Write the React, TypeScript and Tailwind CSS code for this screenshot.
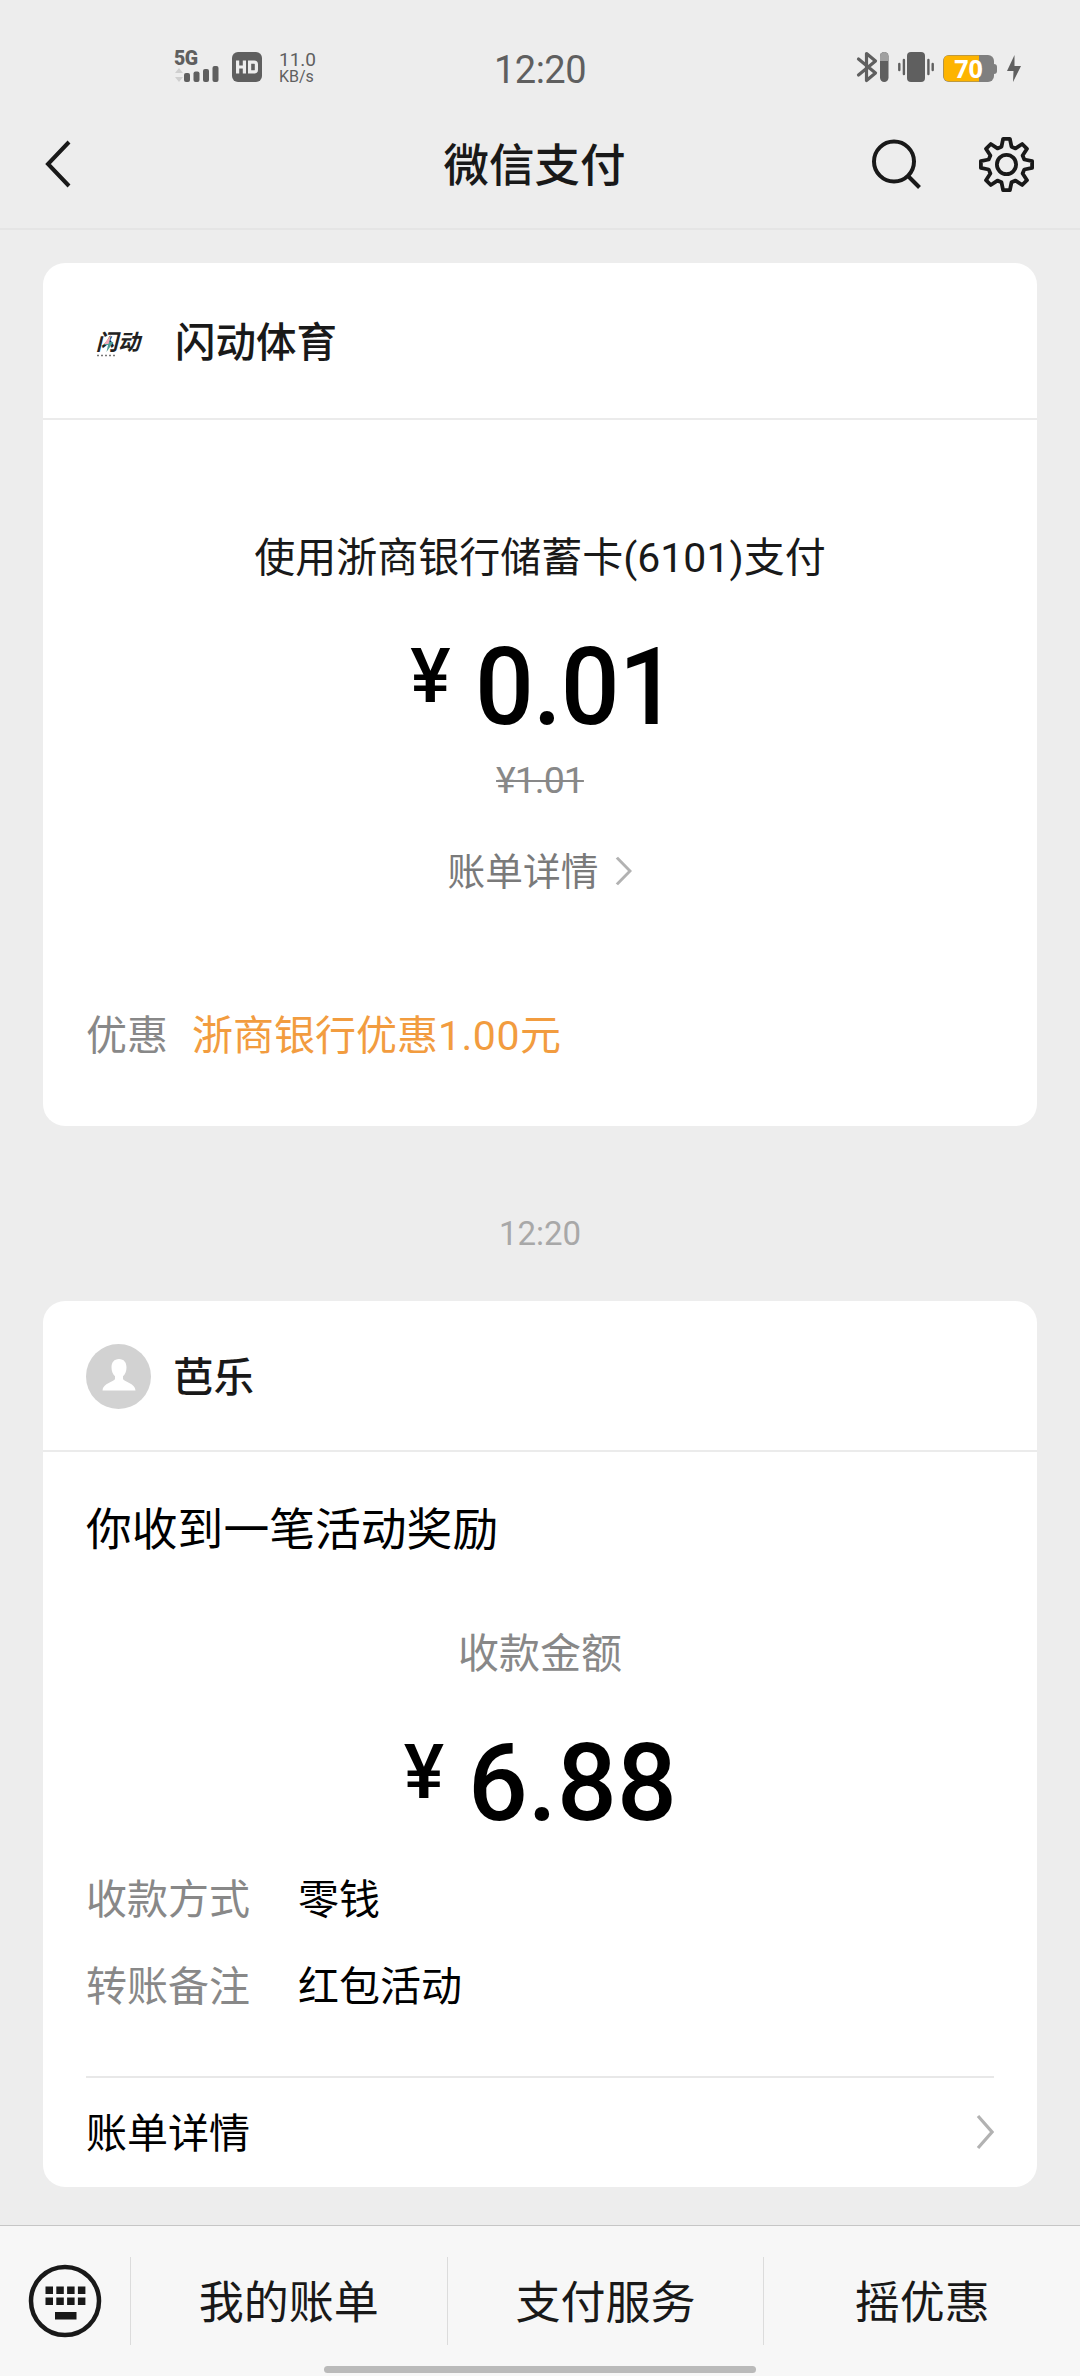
import React from 'react'

interface InfoRowProps {
  label: string
  value: string
}

interface AmountProps {
  value: string
  className?: string
  digitsClassName?: string
}

const infoRows: InfoRowProps[] = [
  { label: '收款方式', value: '零钱' },
  { label: '转账备注', value: '红包活动' },
]

// One gear tooth, repeated every 45 degrees around the centre
const TOOTH = [
  [-5, -17.8],
  [-3.4, -25.6],
  [3.4, -25.6],
  [5, -17.8],
]

const gearPoints = Array.from({ length: 8 })
  .flatMap((_, i) => {
    const a = (i * Math.PI) / 4
    return TOOTH.map(([x, y]) => {
      const px = x * Math.cos(a) - y * Math.sin(a)
      const py = x * Math.sin(a) + y * Math.cos(a)
      return `${px.toFixed(2)},${py.toFixed(2)}`
    })
  })
  .join(' ')

function SignalIcon() {
  return (
    <div className="h-[32px] w-[46px]">
      <div className="h-[15px] whitespace-nowrap font-[Roboto] text-[19.5px] font-black leading-[16px] tracking-[-0.5px]">5G</div>
      <svg width="46" height="17" viewBox="0 15 46 17" fill="#5f5f5f">
        <path d="M5 17l4 5H1zM5 31l-4-5h8z" fill="#cfcfcf" />
        <rect x="10" y="22" width="6" height="9" rx="2" />
        <rect x="19.5" y="20.5" width="6" height="10.5" rx="2" />
        <rect x="29" y="18" width="6" height="13" rx="2" />
        <rect x="38.5" y="15" width="6" height="16" rx="2" />
      </svg>
    </div>
  )
}

function HdIcon() {
  return (
    <svg width="30" height="30" viewBox="0 0 30 30" fill="none">
      <rect width="30" height="30" rx="6" fill="#5f5f5f" />
      <path d="M5.6 8.5v13M12.4 8.5v13M5.6 15h6.8" stroke="#ededed" strokeWidth="3.2" />
      <path d="M17.6 10.1h4.6q2.2 0 2.2 2.2v5.4q0 2.2-2.2 2.2h-4.6z" stroke="#ededed" strokeWidth="3.2" />
    </svg>
  )
}

function DeviceIcons() {
  return (
    <svg width="168" height="32" viewBox="0 0 168 32" fill="none">
      {/* Bluetooth */}
      <path d="M2.5 8l17 14-9 7.500V2.500l9 7.500L2.5 24" stroke="#5f5f5f" strokeWidth="3.200" strokeLinejoin="round" strokeLinecap="round" />
      <rect x="24" y="1" width="8.500" height="30" rx="4.200" fill="#5f5f5f" />
      <path d="M24 10V5.200a4.250 4.250 0 0 1 8.500 0V10z" fill="#a0a0a0" />
      {/* Vibrate */}
      <rect x="51" y="1" width="18" height="30" rx="4" fill="#5f5f5f" />
      <path d="M47.900 9v14M72.400 9v14M43.300 13v6M76.700 13v6" stroke="#5f5f5f" strokeWidth="2.400" strokeLinecap="round" />
      {/* Battery */}
      <rect x="87" y="4" width="51" height="27" rx="6" fill="#7f7f7f" />
      <path d="M138 13q3 0 3 3v4q0 3-3 3z" fill="#7f7f7f" />
      <path d="M93 4.600h30v25.800H93q-5.400 0-5.400-5.400V10q0-5.400 5.400-5.400z" fill="#fdb400" />
      <text x="112.500" y="26.500" textAnchor="middle" fontFamily="Open Sans, sans-serif" fontSize="25" fontWeight="700" fill="#fff">70</text>
      {/* Charging */}
      <path d="M158.500 4l-7.500 16h6.500l-.5 11 8-16h-6.500z" fill="#5f5f5f" />
    </svg>
  )
}

function Chevron({ width, height }: { width: number; height: number }) {
  return (
    <svg width={width} height={height} viewBox="0 0 18 36" preserveAspectRatio="none" fill="none">
      <path d="M2 2l14 16L2 34" stroke="#b2b2b2" strokeWidth="3.2" />
    </svg>
  )
}

function StatusBar() {
  return (
    <div className="grid h-[96px] grid-cols-3 items-start text-[#5f5f5f]">
      <div className="flex pl-[174px] pt-[51px]">
        <SignalIcon />
        <div className="ml-[12px] mt-px">
          <HdIcon />
        </div>
        <div className="ml-[17px] font-[Roboto] leading-[17px]">
          <div className="text-[19px]">11.0</div>
          <div className="text-[16px]">KB/s</div>
        </div>
      </div>
      <div className="pt-[49px] text-center font-[Roboto] text-[38px] leading-[43px] tracking-[-0.5px]">12:20</div>
      <div className="flex justify-end pr-[56px] pt-[51px]">
        <DeviceIcons />
      </div>
    </div>
  )
}

function NavBar() {
  return (
    <header className="flex h-[134px] items-start justify-between border-b-2 border-[#e5e5e5] pl-[44px] pr-[45px] pt-[38px] text-[#191919]">
      <div className="flex h-[60px] w-[155px] items-center">
        <svg width="28" height="48" viewBox="0 0 28 48" fill="none">
          <path d="M25 2L4 24l21 22" stroke="#191919" strokeWidth="4" />
        </svg>
      </div>
      <h1 className="-mt-[2px] text-[45.5px] font-medium leading-[60px]">微信支付</h1>
      <div className="flex h-[60px] items-center gap-[56px]">
        <svg width="52" height="52" viewBox="0 0 52 52" fill="none" stroke="#191919" strokeWidth="4">
          <circle cx="24" cy="23.5" r="20" />
          <path d="M38 38l11.500 11.500" />
        </svg>
        <svg width="57" height="57" viewBox="-28.5 -28.5 57 57" fill="none" stroke="#191919" strokeWidth="3.8" strokeLinejoin="round">
          <polygon points={gearPoints} />
          <circle r="9.6" />
        </svg>
      </div>
    </header>
  )
}

function Amount({ value, className = '', digitsClassName = '' }: AmountProps) {
  return (
    <div className={`flex items-start justify-center font-[Roboto] font-medium text-black ${className}`}>
      <span className="mr-[24px] mt-[5px] text-[76px] leading-[76px]">¥</span>
      <span className={`origin-left text-[108px] leading-[108px] ${digitsClassName}`}>{value}</span>
    </div>
  )
}

function PaymentCard() {
  return (
    <section className="h-[863px] rounded-[22px] bg-white">
      <div className="flex h-[157px] items-center border-b-2 border-[#ebebeb] pl-[54px]">
        {/* Merchant logo */}
        <div className="relative mt-[4px] h-[30px] w-[48px]">
          <span className="absolute -left-px -top-[3px] whitespace-nowrap text-[22px] font-bold italic leading-[30px] text-[#222]">闪动</span>
          <svg className="absolute left-0 top-0" width="24" height="30" viewBox="0 0 24 30">
            <path d="M14 7l-7 10h4l-1.500 7 7-10h-4z" fill="#4f9f98" />
            <path d="M14 7l-7 9h4.500z" fill="#f2a9bd" />
            <path d="M0 27.500h20" stroke="#777" strokeWidth="1.5" strokeDasharray="2 2" />
          </svg>
        </div>
        <h2 className="-mt-[2px] ml-[30px] text-[40.5px] font-medium leading-[56px] text-[#191919]">闪动体育</h2>
      </div>
      <div className="flex flex-col items-center pt-[104px]">
        <p className="h-[60px] text-[41px] leading-[60px] text-[#191919]">
          使用浙商银行储蓄卡<span className="font-[Roboto] leading-none">(6101)</span>支付
        </p>
        <Amount value="0.01" className="mt-[49px] h-[108px] pl-[15px]" digitsClassName="scale-x-[0.96] tracking-[-1px]" />
        <p className="mt-[17px] h-[44px] font-[Roboto] text-[37.5px] leading-[44px] tracking-[-1px] text-[#888] line-through decoration-2">¥1.01</p>
        <div className="mt-[39px] flex h-[56px] items-center">
          <span className="mr-[17px] text-[37.7px] leading-[56px] text-[#7a7a7a]">账单详情</span>
          <div className="pt-[3px]">
            <Chevron width={17} height={30} />
          </div>
        </div>
      </div>
      <div className="mt-[105px] flex h-[60px] pl-[43px] text-[41px] leading-[60px]">
        <span className="text-[#888]">优惠</span>
        <span className="ml-[24px] text-[#f29c3f]">
          浙商银行优惠<span className="font-[Roboto] leading-none tracking-[0.5px]">1.00</span>元
        </span>
      </div>
    </section>
  )
}

function RewardCard() {
  return (
    <section className="h-[886px] rounded-[22px] bg-white text-black">
      <div className="flex h-[151px] items-center border-b-2 border-[#ebebeb] pl-[43px]">
        <svg className="mt-px" width="65" height="65" viewBox="0 0 65 65">
          <circle cx="32.5" cy="32.5" r="32.5" fill="#d2d2d2" />
          <path d="M33 15c5 0 7.500 3.500 7.500 8.500 0 4-1.500 7-3.500 8.700v2.800c0 2 12.500 4.500 12.500 11.500H16.500C16.500 39.500 29 37 29 35v-2.800c-2-1.700-3.500-4.700-3.500-8.700C25.500 18.500 28 15 33 15z" fill="#fff" />
        </svg>
        <h2 className="-mt-[2px] ml-[22px] text-[40.5px] font-medium leading-[56px] text-[#191919]">芭乐</h2>
      </div>
      <p className="pl-[43px] pt-[42px] text-[45.8px] leading-[64px]">你收到一笔活动奖励</p>
      <p className="mt-[62px] text-center text-[41px] leading-[60px] text-[#888]">收款金额</p>
      <Amount value="6.88" className="mt-[49px] h-[108px] pl-[6px]" digitsClassName="scale-x-[0.975]" />
      <dl className="flex h-[185px] flex-col gap-[27px] pl-[43px] pt-[29px] text-[41px] leading-[60px]">
        {infoRows.map((row) => (
          <div key={row.label} className="flex">
            <dt className="w-[212px] text-[#888]">{row.label}</dt>
            <dd>{row.value}</dd>
          </div>
        ))}
      </dl>
      <div className="mx-[43px] mt-[54px] flex h-[109px] items-center justify-between border-t-2 border-[#e8e8e8]">
        <span className="-mt-[3px] text-[41px] leading-[60px]">账单详情</span>
        <Chevron width={18} height={36} />
      </div>
    </section>
  )
}

function BottomMenu() {
  return (
    <footer className="relative flex h-[151px] items-start border-t border-[#c6c6c6] bg-[#f7f7f7] pt-[31px] text-[45px] text-[#191919]">
      <div className="flex h-[88px] w-[130px] items-center pl-[28px]">
        <svg width="74" height="74" viewBox="0 0 74 74">
          <circle cx="37" cy="37" r="34" fill="none" stroke="#191919" strokeWidth="4.5" />
          {[17.5, 28.3, 39.1, 49.9].map((x) => (
            <React.Fragment key={x}>
              <rect x={x} y="22.5" width="7.5" height="7.5" fill="#191919" />
              <rect x={x} y="33.5" width="7.5" height="7.5" fill="#191919" />
            </React.Fragment>
          ))}
          <rect x="27" y="48" width="21.5" height="7.5" fill="#191919" />
        </svg>
      </div>
      {['我的账单', '支付服务', '摇优惠'].map((item) => (
        <button key={item} className="h-[88px] flex-1 border-l border-[#dcdcdc] pb-[2px] leading-[84px]">
          {item}
        </button>
      ))}
      {/* Home indicator */}
      <div className="absolute bottom-[3px] left-[324px] h-[7px] w-[432px] rounded-full bg-[#bababa]" />
    </footer>
  )
}

export default function App() {
  return (
    <div className="flex h-[2376px] w-[1080px] flex-col overflow-hidden bg-[#ededed] font-['Noto_Sans_CJK_SC',sans-serif]">
      <StatusBar />
      <NavBar />
      <main className="flex-1 px-[43px] pt-[33px]">
        <PaymentCard />
        <div className="flex h-[175px] items-center justify-center pt-[40px] font-[Roboto] text-[33px] leading-[40px] text-[#a8a8a8]">12:20</div>
        <RewardCard />
      </main>
      <BottomMenu />
    </div>
  )
}
